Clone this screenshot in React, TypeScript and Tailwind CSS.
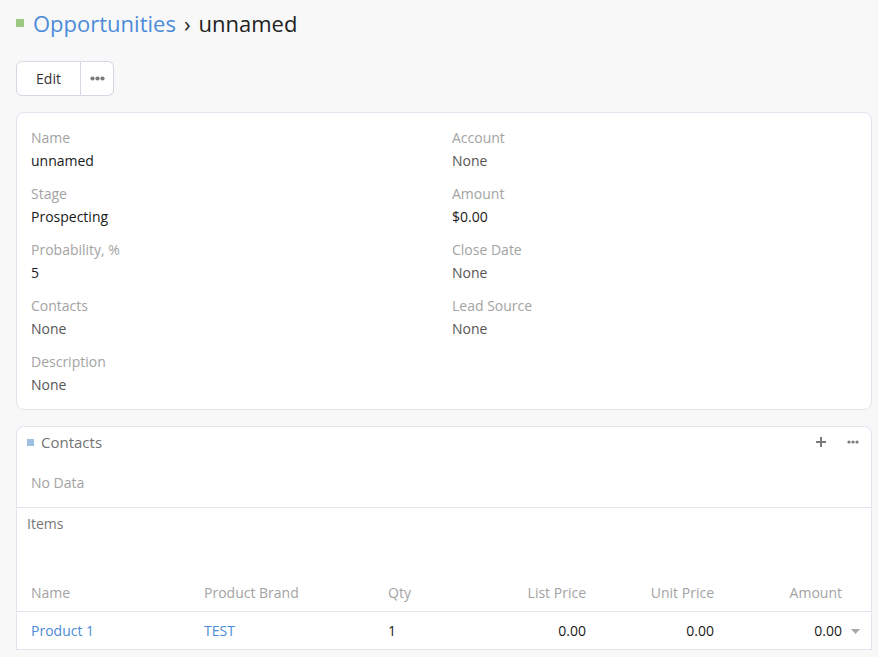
const fieldsLeft = [
  { label: 'Name', value: 'unnamed' },
  { label: 'Stage', value: 'Prospecting' },
  { label: 'Probability, %', value: '5' },
  { label: 'Contacts', value: 'None', none: true },
  { label: 'Description', value: 'None', none: true },
]

const fieldsRight = [
  { label: 'Account', value: 'None', none: true },
  { label: 'Amount', value: '$0.00' },
  { label: 'Close Date', value: 'None', none: true },
  { label: 'Lead Source', value: 'None', none: true },
]

function Field({ label, value, none }: { label: string; value: string; none?: boolean }) {
  return (
    <div className="pb-[13px]">
      <div className="text-[14px] leading-[20px] text-[#a3a3a3]">{label}</div>
      <div className={`mt-[3px] text-[14px] leading-[20px] ${none ? 'text-[#555]' : 'text-[#1a1a1a]'}`}>{value}</div>
    </div>
  )
}

function Dots({ className, big }: { className?: string; big?: boolean }) {
  return big ? (
    <svg width="15" height="5" viewBox="0 0 15 5" className={className}>
      <circle cx="2.5" cy="2.5" r="2.1" fill="currentColor" />
      <circle cx="7.5" cy="2.5" r="2.1" fill="currentColor" />
      <circle cx="12.5" cy="2.5" r="2.1" fill="currentColor" />
    </svg>
  ) : (
    <svg width="12" height="4" viewBox="0 0 12 4" className={className}>
      <circle cx="2" cy="2" r="1.6" fill="currentColor" />
      <circle cx="6" cy="2" r="1.6" fill="currentColor" />
      <circle cx="10" cy="2" r="1.6" fill="currentColor" />
    </svg>
  )
}

const cell = 'pt-[9px] pb-[8px] border-b border-[#e4e4ef]'
const head = 'text-[#a3a3a3] pb-[8px] border-b border-[#e4e4ef]'

export default function App() {
  return (
    <div
      className="min-h-[657px] bg-[#f8f8f9] pl-[16px] pr-[6px] pt-[10px]"
      style={{ fontFamily: '"Open Sans", "Noto Sans", sans-serif' }}
    >
      <div className="flex items-center h-[26px]">
        <span className="w-[8px] h-[8px] bg-[#9cc981] mr-[9px] -mt-[1px]" />
        <span className="text-[22px] leading-[26px] text-[#4d8bd8]">Opportunities</span>
        <span className="text-[22px] leading-[26px] text-[#222] ml-[8px] mr-[8px]">›</span>
        <span className="text-[22px] leading-[26px] text-[#222]">unnamed</span>
      </div>

      <div className="mt-[25px] flex">
        <button className="w-[65px] h-[35px] border border-[#d7d7e3] rounded-l-[6px] bg-white text-[14px] text-[#333]">
          Edit
        </button>
        <button className="w-[33px] h-[35px] border border-l-0 border-[#d7d7e3] rounded-r-[6px] bg-white flex items-center justify-center text-[#7a7a7a]">
          <Dots big />
        </button>
      </div>

      <div className="mt-[16px] bg-white border border-[#e4e4ef] rounded-[8px] pt-[15px] px-[14px] grid grid-cols-[421px_1fr] h-[298px]">
        <div>
          {fieldsLeft.map((f) => (
            <Field key={f.label} {...f} />
          ))}
        </div>
        <div>
          {fieldsRight.map((f) => (
            <Field key={f.label} {...f} />
          ))}
        </div>
      </div>

      <div className="mt-[16px] bg-white border border-[#e4e4ef] rounded-t-[8px] border-b-0">
        <div className="flex items-center h-[30px] pl-[10px] pr-[12px]">
          <span className="w-[7px] h-[7px] bg-[#9dc1de] mr-[7px]" />
          <span className="text-[15px] text-[#737373] flex-1">Contacts</span>
          <svg width="12" height="12" viewBox="0 0 12 12" className="text-[#7a7a7a] mr-[20px]">
            <path d="M6 1v10M1 6h10" stroke="currentColor" strokeWidth="2" />
          </svg>
          <Dots className="text-[#7a7a7a]" />
        </div>
        <div className="h-[50px] pl-[14px] pt-[16px] text-[14px] leading-[20px] text-[#a3a3a3]">No Data</div>
        <div className="border-t border-[#e4e4ef]">
          <div className="pl-[10px] pt-[6px] h-[75px] text-[14px] leading-[20px] text-[#777]">Items</div>
          <div className="grid grid-cols-[173px_184px_120px_78px_128px_128px_1fr] pl-[14px] text-[14px] leading-[20px]">
            <div className={`${head} -ml-[14px] pl-[14px]`}>Name</div>
            <div className={head}>Product Brand</div>
            <div className={head}>Qty</div>
            <div className={`${head} text-right`}>List Price</div>
            <div className={`${head} text-right`}>Unit Price</div>
            <div className={`${head} text-right`}>Amount</div>
            <div className="pb-[8px] border-b border-[#e4e4ef]" />

            <div className={`${cell} text-[#4d8bd8] -ml-[14px] pl-[14px]`}>Product 1</div>
            <div className={`${cell} text-[#4d8bd8]`}>TEST</div>
            <div className={`${cell} text-[#1a1a1a]`}>1</div>
            <div className={`${cell} text-[#1a1a1a] text-right`}>0.00</div>
            <div className={`${cell} text-[#1a1a1a] text-right`}>0.00</div>
            <div className={`${cell} text-[#1a1a1a] text-right`}>0.00</div>
            <div className={`${cell} flex items-center pl-[9px]`}>
              <svg width="9" height="5" viewBox="0 0 9 5">
                <path d="M0 0h9L4.5 5z" fill="#a8a8a8" />
              </svg>
            </div>
          </div>
        </div>
      </div>
    </div>
  )
}
